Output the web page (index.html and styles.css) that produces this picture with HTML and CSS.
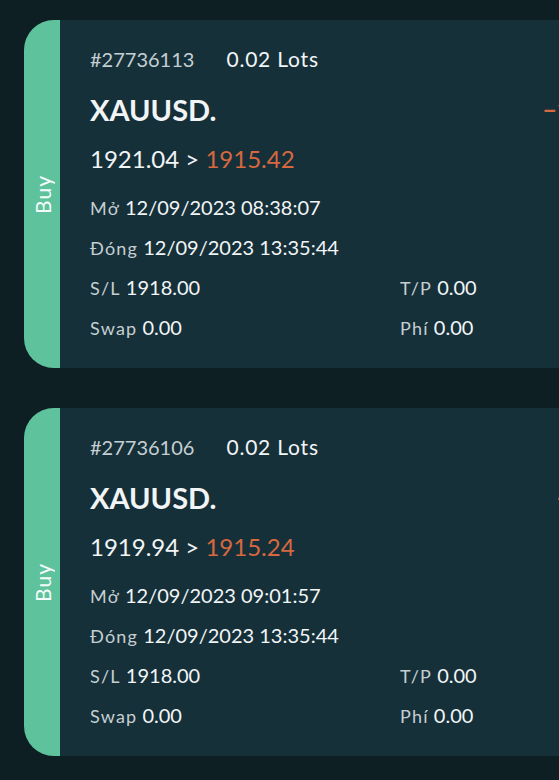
FILE: index.html
```html
<!DOCTYPE html>
<html lang="en">
<head>
    <meta charset="UTF-8">
    <title>Lịch sử giao dịch</title>
    <link rel="stylesheet" href="styles.css">
</head>
<body>

<div class="orders">
    <div class="order">
        <div class="side"><span>Buy</span></div>
        <div class="info">
            <div class="head"><span class="ticket">#27736113</span><span class="lots">0.02 Lots</span></div>
            <div class="symbol-row"><span class="symbol">XAUUSD.</span><span class="profit">−11.24</span></div>
            <div class="prices">1921.04 &gt; <span class="loss">1915.42</span></div>
            <div class="line"><span class="label">Mở</span> 12/09/2023 08:38:07</div>
            <div class="line"><span class="label">Đóng</span> 12/09/2023 13:35:44</div>
            <div class="pair">
                <div class="line"><span class="label">S/L</span> 1918.00</div>
                <div class="line"><span class="label">T/P</span> 0.00</div>
            </div>
            <div class="pair">
                <div class="line"><span class="label">Swap</span> 0.00</div>
                <div class="line"><span class="label">Phí</span> 0.00</div>
            </div>
        </div>
    </div>

    <div class="order">
        <div class="side"><span>Buy</span></div>
        <div class="info">
            <div class="head"><span class="ticket">#27736106</span><span class="lots">0.02 Lots</span></div>
            <div class="symbol-row"><span class="symbol">XAUUSD.</span><span class="profit">−9.40</span></div>
            <div class="prices">1919.94 &gt; <span class="loss">1915.24</span></div>
            <div class="line"><span class="label">Mở</span> 12/09/2023 09:01:57</div>
            <div class="line"><span class="label">Đóng</span> 12/09/2023 13:35:44</div>
            <div class="pair">
                <div class="line"><span class="label">S/L</span> 1918.00</div>
                <div class="line"><span class="label">T/P</span> 0.00</div>
            </div>
            <div class="pair">
                <div class="line"><span class="label">Swap</span> 0.00</div>
                <div class="line"><span class="label">Phí</span> 0.00</div>
            </div>
        </div>
    </div>
</div>

</body>
</html>
```

FILE: styles.css
```css
body {
    margin: 0;
    background: #0e1f24;
    font-family: Lato, "Noto Sans", sans-serif;
    color: #f2f5f6;
    overflow: hidden;
}
.orders {
    padding: 20px 0 0 24px;
    width: 594px;
}
.order {
    display: flex;
    height: 348px;
    margin-bottom: 40px;
    background: #16303a;
    border-radius: 30px 0 0 30px;
    overflow: hidden;
}
.side {
    width: 36px;
    flex-shrink: 0;
    background: #5ec29c;
    display: flex;
    align-items: center;
    justify-content: center;
}
.side span {
    writing-mode: vertical-rl;
    transform: rotate(180deg);
    font-size: 21px;
    letter-spacing: 1px;
    color: #f4fbf8;
}
.info {
    flex: 1;
    padding: 24px 0 0 30px;
}
.head {
    font-size: 20px;
    line-height: 30px;
    display: flex;
    gap: 32px;
}
.ticket { color: #c5cfd2; }
.lots {
    font-size: 21px;
    letter-spacing: 0.8px;
}
.symbol-row {
    margin-top: 21px;
    line-height: 30px;
    display: flex;
    justify-content: space-between;
}
.symbol {
    font-size: 29px;
    font-weight: bold;
}
.profit {
    font-size: 24px;
    font-weight: bold;
    color: #d8683f;
}
.prices {
    margin-top: 19px;
    font-size: 24px;
    line-height: 30px;
}
.loss { color: #d8683f; }
.prices + .line { margin-top: 13px; }
.line {
    font-size: 20px;
    line-height: 40px;
}
.label {
    font-size: 18px;
    line-height: 1;
    letter-spacing: 1.2px;
    color: #c5cfd2;
}
.pair {
    display: grid;
    grid-template-columns: 310px 1fr;
}
```
